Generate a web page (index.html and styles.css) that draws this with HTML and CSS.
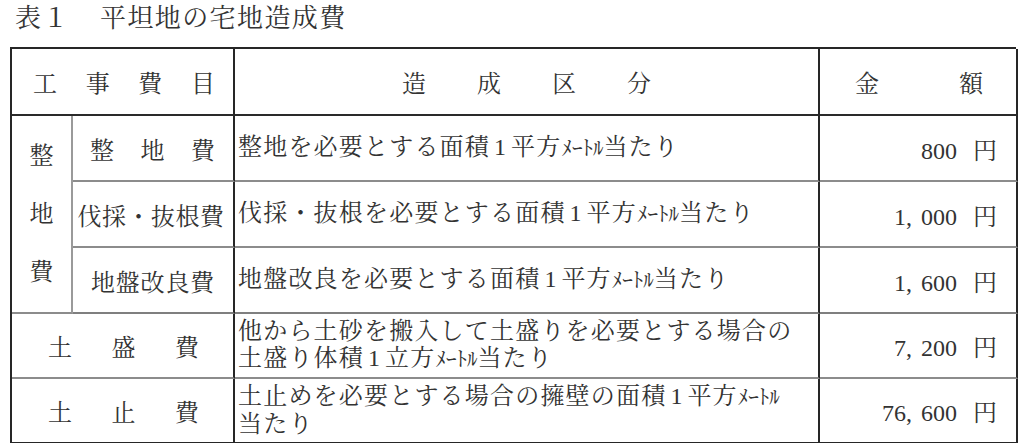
FILE: index.html
```html
<!DOCTYPE html>
<html lang="ja">
<head>
<meta charset="utf-8">
<title>表１ 平坦地の宅地造成費</title>
<link rel="stylesheet" href="styles.css">
</head>
<body>
<h1 class="title"><span class="t-num">表１</span><span class="t-main">平坦地の宅地造成費</span></h1>
<div class="table">
  <div class="cell head c12 spread sp-head1"><span>工</span><span>事</span><span>費</span><span>目</span></div>
  <div class="cell head c3 gapped"><span>造</span><span>成</span><span>区</span><span>分</span></div>
  <div class="cell head c4 spread sp-head3"><span>金</span><span>額</span></div>

  <div class="cell group"><span>整</span><span>地</span><span>費</span></div>

  <div class="cell sub spread sp-sub"><span>整</span><span>地</span><span>費</span></div>
  <div class="cell desc"><div class="txt">整地を必要とする面積<span class="num">1</span>平方<span class="unit">ﾒｰﾄﾙ</span>当たり</div></div>
  <div class="cell amount"><div class="txt">800<span class="yen">円</span></div></div>

  <div class="cell sub center ls-a"><div class="txt">伐採・抜根費</div></div>
  <div class="cell desc"><div class="txt">伐採・抜根を必要とする面積<span class="num">1</span>平方<span class="unit">ﾒｰﾄﾙ</span>当たり</div></div>
  <div class="cell amount"><div class="txt">1,<span class="sp"></span>000<span class="yen">円</span></div></div>

  <div class="cell sub center ls-b row-end"><div class="txt">地盤改良費</div></div>
  <div class="cell desc row-end"><div class="txt">地盤改良を必要とする面積<span class="num">1</span>平方<span class="unit">ﾒｰﾄﾙ</span>当たり</div></div>
  <div class="cell amount row-end"><div class="txt">1,<span class="sp"></span>600<span class="yen">円</span></div></div>

  <div class="cell c12 spread sp-wide"><span>土</span><span>盛</span><span>費</span></div>
  <div class="cell desc"><div class="txt">他から土砂を搬入して土盛りを必要とする場合の<br>土盛り体積<span class="num">1</span>立方<span class="unit">ﾒｰﾄﾙ</span>当たり</div></div>
  <div class="cell amount"><div class="txt">7,<span class="sp"></span>200<span class="yen">円</span></div></div>

  <div class="cell c12 spread sp-wide last"><span>土</span><span>止</span><span>費</span></div>
  <div class="cell desc last"><div class="txt">土止めを必要とする場合の擁壁の面積<span class="num">1</span>平方<span class="unit">ﾒｰﾄﾙ</span><br>当たり</div></div>
  <div class="cell amount last"><div class="txt">76,<span class="sp"></span>600<span class="yen">円</span></div></div>
</div>
</body>
</html>
```

FILE: styles.css
```css
* {
  box-sizing: border-box;
}

html, body {
  margin: 0;
  padding: 0;
  background: #ffffff;
}

body {
  width: 1024px;
  height: 443px;
  overflow: hidden;
  color: #333333;
  font-family: "Liberation Serif", "Noto Serif CJK JP", "Noto Sans CJK JP", serif;
  font-weight: 400;
}

.title {
  margin: 0;
  padding: 4px 0 0 15px;
  height: 47px;
  font-size: 26px;
  line-height: 30px;
  font-weight: 400;
  letter-spacing: 1.4px;
  white-space: nowrap;
}

.t-num {
  display: inline-block;
  width: 85px;
}

.table {
  margin-left: 10px;
  width: 1006px;
  display: grid;
  grid-template-columns: 61px 162px 585px 198px;
  grid-template-rows: 67px 66px 66px 66px 65px 65px;
  border-top: 2px solid #262626;
  border-left: 2px solid #262626;
  font-size: 24px;
}

.cell {
  display: flex;
  align-items: center;
  border-right: 2px solid #8c8c8c;
  border-bottom: 2px solid #8c8c8c;
  white-space: nowrap;
}

.head {
  border-bottom-color: #2a2a2a;
}

.c12 {
  grid-column: 1 / 3;
}

.c3,
.c4,
.c12,
.sub,
.desc,
.amount {
  border-right-color: #262626;
}

.spread {
  justify-content: space-between;
}

.sp-head1 {
  padding: 0 18px 0 21px;
}

.gapped {
  justify-content: center;
  gap: 51px;
}

.sp-head3 {
  padding: 0 33px 0 35px;
}

.group {
  grid-column: 1;
  grid-row: 2 / 5;
  flex-direction: column;
  justify-content: center;
  line-height: 58px;
  border-right-color: #9a9a9a;
}

.sp-sub {
  padding: 0 18px 0 17px;
}

.center {
  justify-content: center;
}

.ls-a {
  letter-spacing: 0.5px;
  padding-right: 4px;
}

.ls-b {
  letter-spacing: 0.8px;
}

.sp-wide {
  padding: 0 34px 0 36px;
}

.desc {
  padding-left: 3px;
  letter-spacing: 1.2px;
  line-height: 27px;
}

.num {
  margin: 0 5px 0 4px;
  letter-spacing: 0;
}

.unit {
  font-size: 21px;
  letter-spacing: 0;
}

.amount {
  justify-content: flex-end;
  padding-right: 19px;
}

.sp {
  display: inline-block;
  width: 9px;
}

.yen {
  margin-left: 16px;
}

.row-end {
  border-bottom-color: #7f7f7f;
}

.last {
  border-bottom-color: #262626;
}
```
